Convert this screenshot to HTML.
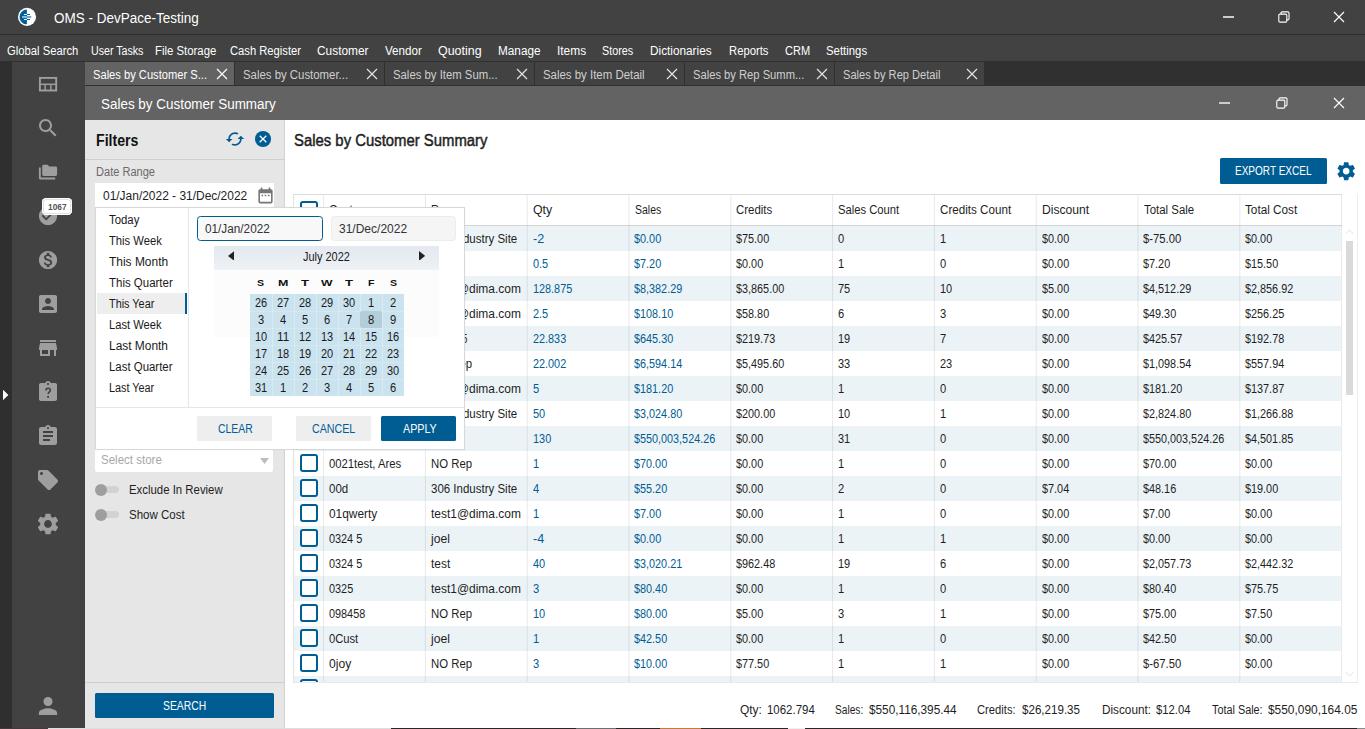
<!DOCTYPE html>
<html>
<head>
<meta charset="utf-8">
<title>OMS - DevPace-Testing</title>
<style>
*{box-sizing:border-box;margin:0;padding:0}
html,body{width:1365px;height:729px;overflow:hidden;background:#2f2f2f;font-family:"Liberation Sans",sans-serif;}
body{position:relative;}
.a{position:absolute;display:block;}
.t{position:absolute;display:block;white-space:nowrap;line-height:20px;transform-origin:0 0;}
</style>
</head>
<body>
<div class="a" style="left:0px;top:0px;width:1365px;height:34px;background:#424242;"></div>
<div class="a" style="left:0px;top:34px;width:1365px;height:1px;background:#2e2e2e;"></div>
<div class="a" style="left:0px;top:35px;width:1365px;height:26px;background:#424242;"></div>
<div class="a" style="left:0px;top:61px;width:1365px;height:25px;background:#303030;"></div>
<div class="a" style="left:0px;top:61px;width:12px;height:668px;background:#2f2f2f;"></div>
<div class="a" style="left:12px;top:62px;width:73px;height:667px;background:#424242;"></div>
<div class="a" style="left:85px;top:86px;width:1280px;height:34px;background:#636363;"></div>
<div class="a" style="left:85px;top:120px;width:199px;height:608px;background:#e6e6e6;"></div>
<div class="a" style="left:284px;top:120px;width:1px;height:608px;background:#d2d2d2;"></div>
<div class="a" style="left:285px;top:120px;width:1080px;height:608px;background:#ffffff;"></div>
<svg class="a" style="left:17px;top:7px;" width="20" height="20" viewBox="0 0 20 20"><circle cx="10" cy="9.9" r="9.05" fill="#fdfefe"/><path d="M9.9 2.5A7.4 7.4 0 0 0 9.9 17.3Z" fill="#005f98"/><path d="M6.9 7.48H9.9M6.9 12.5H9.9" stroke="#fff" stroke-width="1.05"/><path d="M9.9 7.48H13M9.9 12.5H13" stroke="#005f98" stroke-width="1.05"/><path d="M5.1 10H9.9" stroke="#b4d2e4" stroke-width="1.6"/><path d="M9.9 10H14.2" stroke="#4a8dba" stroke-width="1.6"/></svg>
<span class="t " style="left:54.30px;top:8px;font-size:14px;color:#fff;transform:scaleX(0.9636);">OMS - DevPace-Testing</span>
<div class="a" style="left:1223.1px;top:16.1px;width:11px;height:1.5px;background:#cccccc;"></div>
<svg class="a" style="left:1277.7px;top:11px;" width="12" height="12" viewBox="0 0 12 12"><rect x="3" y="0.9" width="8" height="8" rx="1.2" fill="none" stroke="#fff" stroke-width="1.1"/><rect x="0.8" y="3.1" width="8" height="8" rx="1.2" fill="#424242" stroke="#fff" stroke-width="1.1"/></svg>
<svg class="a" style="left:1332.75px;top:11px;" width="12" height="12" viewBox="0 0 12 12"><path d="M1 1L11 11M11 1L1 11" stroke="#fff" stroke-width="1.15" fill="none"/></svg>
<div class="a" style="left:1219.2px;top:102.1px;width:11px;height:1.5px;background:#cccccc;"></div>
<svg class="a" style="left:1275.7px;top:97px;" width="12" height="12" viewBox="0 0 12 12"><rect x="3" y="0.9" width="8" height="8" rx="1.2" fill="none" stroke="#fff" stroke-width="1.1"/><rect x="0.8" y="3.1" width="8" height="8" rx="1.2" fill="#636363" stroke="#fff" stroke-width="1.1"/></svg>
<svg class="a" style="left:1332.75px;top:97px;" width="12" height="12" viewBox="0 0 12 12"><path d="M1 1L11 11M11 1L1 11" stroke="#fff" stroke-width="1.15" fill="none"/></svg>
<span class="t " style="left:6.50px;top:41px;font-size:12px;color:#fff;transform:scaleX(0.9370);">Global Search</span>
<span class="t " style="left:90.60px;top:41px;font-size:12px;color:#fff;transform:scaleX(0.8863);">User Tasks</span>
<span class="t " style="left:155.20px;top:41px;font-size:12px;color:#fff;transform:scaleX(0.9474);">File Storage</span>
<span class="t " style="left:230.00px;top:41px;font-size:12px;color:#fff;transform:scaleX(0.9338);">Cash Register</span>
<span class="t " style="left:317.20px;top:41px;font-size:12px;color:#fff;transform:scaleX(0.9900);">Customer</span>
<span class="t " style="left:384.90px;top:41px;font-size:12px;color:#fff;transform:scaleX(0.9703);">Vendor</span>
<span class="t " style="left:438.00px;top:41px;font-size:12px;color:#fff;transform:scaleX(1.0375);">Quoting</span>
<span class="t " style="left:498.20px;top:41px;font-size:12px;color:#fff;transform:scaleX(0.9823);">Manage</span>
<span class="t " style="left:556.90px;top:41px;font-size:12px;color:#fff;transform:scaleX(0.9918);">Items</span>
<span class="t " style="left:602.30px;top:41px;font-size:12px;color:#fff;transform:scaleX(0.8968);">Stores</span>
<span class="t " style="left:650.30px;top:41px;font-size:12px;color:#fff;transform:scaleX(0.9826);">Dictionaries</span>
<span class="t " style="left:728.50px;top:41px;font-size:12px;color:#fff;transform:scaleX(0.9378);">Reports</span>
<span class="t " style="left:784.60px;top:41px;font-size:12px;color:#fff;transform:scaleX(0.9186);">CRM</span>
<span class="t " style="left:826.40px;top:41px;font-size:12px;color:#fff;transform:scaleX(0.9480);">Settings</span>
<div class="a" style="left:85px;top:62px;width:149px;height:23px;background:#636363;"></div>
<span class="t " style="left:93.40px;top:65px;font-size:12px;color:#fff;transform:scaleX(0.9290);">Sales by Customer S...</span>
<svg class="a" style="left:216px;top:68px;" width="12" height="12" viewBox="0 0 12 12"><path d="M1 1L11 11M11 1L1 11" stroke="#fff" stroke-width="1.2" fill="none"/></svg>
<div class="a" style="left:235px;top:62px;width:149px;height:23px;background:#424242;"></div>
<span class="t " style="left:243.20px;top:65px;font-size:12px;color:#cfcfcf;transform:scaleX(0.9493);">Sales by Customer...</span>
<svg class="a" style="left:366px;top:68px;" width="12" height="12" viewBox="0 0 12 12"><path d="M1 1L11 11M11 1L1 11" stroke="#e4e4e4" stroke-width="1.2" fill="none"/></svg>
<div class="a" style="left:385px;top:62px;width:149px;height:23px;background:#424242;"></div>
<span class="t " style="left:393.10px;top:65px;font-size:12px;color:#cfcfcf;transform:scaleX(0.9448);">Sales by Item Sum...</span>
<svg class="a" style="left:516px;top:68px;" width="12" height="12" viewBox="0 0 12 12"><path d="M1 1L11 11M11 1L1 11" stroke="#e4e4e4" stroke-width="1.2" fill="none"/></svg>
<div class="a" style="left:535px;top:62px;width:149px;height:23px;background:#424242;"></div>
<span class="t " style="left:543.00px;top:65px;font-size:12px;color:#cfcfcf;transform:scaleX(0.9521);">Sales by Item Detail</span>
<svg class="a" style="left:666px;top:68px;" width="12" height="12" viewBox="0 0 12 12"><path d="M1 1L11 11M11 1L1 11" stroke="#e4e4e4" stroke-width="1.2" fill="none"/></svg>
<div class="a" style="left:685px;top:62px;width:149px;height:23px;background:#424242;"></div>
<span class="t " style="left:693.20px;top:65px;font-size:12px;color:#cfcfcf;transform:scaleX(0.9323);">Sales by Rep Summ...</span>
<svg class="a" style="left:816px;top:68px;" width="12" height="12" viewBox="0 0 12 12"><path d="M1 1L11 11M11 1L1 11" stroke="#e4e4e4" stroke-width="1.2" fill="none"/></svg>
<div class="a" style="left:835px;top:62px;width:149px;height:23px;background:#424242;"></div>
<span class="t " style="left:843.10px;top:65px;font-size:12px;color:#cfcfcf;transform:scaleX(0.9242);">Sales by Rep Detail</span>
<svg class="a" style="left:966px;top:68px;" width="12" height="12" viewBox="0 0 12 12"><path d="M1 1L11 11M11 1L1 11" stroke="#e4e4e4" stroke-width="1.2" fill="none"/></svg>
<div class="a" style="left:85px;top:85px;width:1280px;height:1px;background:#303030;"></div>
<span class="t " style="left:101.30px;top:94px;font-size:14px;color:#fff;transform:scaleX(0.9596);">Sales by Customer Summary</span>
<svg class="a" style="left:36px;top:72px;" width="24" height="24" viewBox="0 0 24 24"><rect x="3.9" y="5.9" width="16.3" height="12.6" fill="none" stroke="#9e9e9e" stroke-width="1.9"/><path d="M3.9 12.3H20.2" stroke="#9e9e9e" stroke-width="1.5"/><path d="M9.1 12.3V18.5M14.9 12.3V18.5" stroke="#9e9e9e" stroke-width="1.5"/></svg>
<svg class="a" style="left:36px;top:116px;" width="24" height="24" viewBox="0 0 24 24"><path fill="#9e9e9e" d="M15.5 14h-.79l-.28-.27C15.41 12.59 16 11.11 16 9.5 16 5.91 13.09 3 9.5 3S3 5.91 3 9.5 5.91 16 9.5 16c1.61 0 3.09-.59 4.23-1.57l.27.28v.79l5 4.99L20.49 19l-4.99-5zm-6 0C7.01 14 5 11.99 5 9.5S7.01 5 9.5 5 14 7.01 14 9.5 11.99 14 9.5 14z"/></svg>
<svg class="a" style="left:36px;top:160px;" width="24" height="24" viewBox="0 0 24 24"><path fill="#9e9e9e" d="M2.9 7.4H4.8V17.5H19.2V19.4H4.3C3.5 19.4 2.9 18.8 2.9 18Z"/><path fill="#9e9e9e" d="M7.6 4.8H11.6L13.3 6.5H19.7C20.5 6.5 21.1 7.1 21.1 7.9V14.6C21.1 15.4 20.5 16 19.7 16H7.6C6.8 16 6.2 15.4 6.2 14.6V6.2C6.2 5.4 6.8 4.8 7.6 4.8Z"/></svg>
<svg class="a" style="left:36px;top:204px;" width="24" height="24" viewBox="0 0 24 24"><g transform="translate(12 12) scale(0.91) translate(-12 -12)"><path fill="#9e9e9e" d="M12 2C6.48 2 2 6.48 2 12s4.48 10 10 10 10-4.48 10-10S17.52 2 12 2zm-2 15l-5-5 1.41-1.41L10 14.17l7.59-7.59L19 8l-9 9z"/></g></svg>
<svg class="a" style="left:36px;top:248px;" width="24" height="24" viewBox="0 0 24 24"><g transform="translate(12 12) scale(0.91) translate(-12 -12)"><path fill="#9e9e9e" d="M12 2C6.48 2 2 6.48 2 12s4.48 10 10 10 10-4.48 10-10S17.52 2 12 2zm1.41 16.09V20h-2.67v-1.93c-1.71-.36-3.16-1.46-3.27-3.4h1.96c.1 1.05.82 1.87 2.65 1.87 1.96 0 2.4-.98 2.4-1.59 0-.83-.44-1.61-2.67-2.14-2.48-.6-4.18-1.62-4.18-3.67 0-1.72 1.39-2.84 3.11-3.21V4h2.67v1.95c1.86.45 2.79 1.86 2.85 3.39H14.3c-.05-1.11-.64-1.87-2.22-1.87-1.5 0-2.4.68-2.4 1.64 0 .84.65 1.39 2.67 1.91s4.18 1.39 4.18 3.91c-.01 1.83-1.38 2.83-3.12 3.16z"/></g></svg>
<svg class="a" style="left:36px;top:292px;" width="24" height="24" viewBox="0 0 24 24"><path fill="#9e9e9e" d="M3 5v14c0 1.1.89 2 2 2h14c1.1 0 2-.9 2-2V5c0-1.1-.9-2-2-2H5c-1.11 0-2 .9-2 2zm12 4c0 1.66-1.34 3-3 3s-3-1.34-3-3 1.34-3 3-3 3 1.34 3 3zm-9 8c0-2 4-3.1 6-3.1s6 1.1 6 3.1v1H6v-1z"/></svg>
<svg class="a" style="left:36px;top:336px;" width="24" height="24" viewBox="0 0 24 24"><path fill="#9e9e9e" d="M20 4H4v2h16V4zm1 10v-2l-1-5H4l-1 5v2h1v6h10v-6h4v6h2v-6h1zm-9 4H6v-4h6v4z"/></svg>
<svg class="a" style="left:36px;top:380px;" width="24" height="24" viewBox="0 0 24 24"><path fill="#9e9e9e" d="M19 3h-4.18C14.4 1.84 13.3 1 12 1c-1.3 0-2.4.84-2.82 2H5c-1.1 0-2 .9-2 2v14c0 1.1.9 2 2 2h14c1.1 0 2-.9 2-2V5c0-1.1-.9-2-2-2zm-7 0c.55 0 1 .45 1 1s-.45 1-1 1-1-.45-1-1 .45-1 1-1z"/><path d="M9.9 10.6c0-1.4 1-2.3 2.2-2.3s2.2.8 2.2 2c0 1.7-2.2 1.9-2.2 3.8" fill="none" stroke="#424242" stroke-width="1.6"/><circle cx="12.1" cy="16.9" r="1.05" fill="#424242"/></svg>
<svg class="a" style="left:36px;top:424px;" width="24" height="24" viewBox="0 0 24 24"><path fill="#9e9e9e" d="M19 3h-4.18C14.4 1.84 13.3 1 12 1c-1.3 0-2.4.84-2.82 2H5c-1.1 0-2 .9-2 2v14c0 1.1.9 2 2 2h14c1.1 0 2-.9 2-2V5c0-1.1-.9-2-2-2zm-7 0c.55 0 1 .45 1 1s-.45 1-1 1-1-.45-1-1 .45-1 1-1zm2 14H7v-2h7v2zm3-4H7v-2h10v2zm0-4H7V7h10v2z"/></svg>
<svg class="a" style="left:36px;top:468px;" width="24" height="24" viewBox="0 0 24 24"><path fill="#9e9e9e" d="M21.41 11.58l-9-9C12.05 2.22 11.55 2 11 2H4c-1.1 0-2 .9-2 2v7c0 .55.22 1.05.59 1.42l9 9c.36.36.86.58 1.41.58.55 0 1.05-.22 1.41-.59l7-7c.37-.36.59-.86.59-1.41 0-.55-.23-1.06-.59-1.42zM5.5 7C4.67 7 4 6.33 4 5.5S4.67 4 5.5 4 7 4.67 7 5.5 6.33 7 5.5 7z"/></svg>
<svg class="a" style="left:36px;top:512px;overflow:visible;" width="24" height="24" viewBox="0 0 24 24"><g transform="translate(12 12) scale(1.08) translate(-12 -12)"><path fill="#9e9e9e" d="M19.14 12.94c.04-.3.06-.61.06-.94 0-.32-.02-.64-.07-.94l2.03-1.58c.18-.14.23-.41.12-.61l-1.92-3.32c-.12-.22-.37-.29-.59-.22l-2.39.96c-.5-.38-1.03-.7-1.62-.94l-.36-2.54c-.04-.24-.24-.41-.48-.41h-3.84c-.24 0-.43.17-.47.41l-.36 2.54c-.59.24-1.13.57-1.62.94l-2.39-.96c-.22-.08-.47 0-.59.22L2.74 8.87c-.12.21-.08.47.12.61l2.03 1.58c-.05.3-.09.63-.09.94s.02.64.07.94l-2.03 1.58c-.18.14-.23.41-.12.61l1.92 3.32c.12.22.37.29.59.22l2.39-.96c.5.38 1.03.7 1.62.94l.36 2.54c.05.24.24.41.48.41h3.84c.24 0 .44-.17.47-.41l.36-2.54c.59-.24 1.13-.56 1.62-.94l2.39.96c.22.08.47 0 .59-.22l1.92-3.32c.12-.22.07-.47-.12-.61l-2.01-1.58zM12 15.6c-1.98 0-3.6-1.62-3.6-3.6s1.62-3.6 3.6-3.6 3.6 1.62 3.6 3.6-1.62 3.6-3.6 3.6z"/></g></svg>
<svg class="a" style="left:36px;top:694px;" width="24" height="24" viewBox="0 0 24 24"><g transform="translate(12 12) scale(1.14) translate(-12 -12)"><path fill="#9e9e9e" d="M12 12c2.21 0 4-1.79 4-4s-1.79-4-4-4-4 1.79-4 4 1.79 4 4 4zm0 2c-2.67 0-8 1.34-8 4v2h16v-2c0-2.66-5.33-4-8-4z"/></g></svg>
<svg class="a" style="left:2px;top:389px;" width="8" height="12" viewBox="0 0 8 12"><path d="M1 0.8L6.4 6L1 11.2Z" fill="#fff"/></svg>
<div class="a" style="left:42px;top:198px;width:30px;height:17px;background:#fff;border-radius:4.5px;box-shadow:inset 0 0 0 1px #fff, inset 0 0 0 2px #e2e2e2;"></div>
<span class="t " style="left:47.80px;top:197px;font-size:10px;color:#555;transform:scale(0.8360,0.88);transform-origin:0 13px;font-weight:700;">1067</span>
<span class="t " style="left:95.60px;top:131px;font-size:16px;color:#111;transform:scaleX(0.8830);font-weight:700;">Filters</span>
<svg class="a" style="left:224.8px;top:128.95px;" width="20" height="20" viewBox="0 0 24 24"><path fill="#005d94" d="M19 8l-4 4h3c0 3.31-2.69 6-6 6-1.01 0-1.97-.25-2.8-.7l-1.46 1.46C8.97 19.54 10.43 20 12 20c4.42 0 8-3.58 8-8h3l-4-4zM6 12c0-3.31 2.69-6 6-6 1.01 0 1.97.25 2.8.7l1.46-1.46C15.03 4.46 13.57 4 12 4c-4.42 0-8 3.58-8 8H1l4 4 4-4H6z"/></svg>
<svg class="a" style="left:254.05px;top:129.95px;" width="18" height="18" viewBox="0 0 18 18"><circle cx="9" cy="9" r="8.05" fill="#005d94"/><path d="M5.7 5.7L12.3 12.3M12.3 5.7L5.7 12.3" stroke="#fff" stroke-width="1.3"/></svg>
<div class="a" style="left:85px;top:159px;width:199px;height:1px;background:#cfcfcf;"></div>
<span class="t " style="left:95.60px;top:162px;font-size:12px;color:#6a6a6a;transform:scaleX(0.9212);">Date Range</span>
<div class="a" style="left:95px;top:183px;width:179px;height:25px;background:#fff;"></div>
<span class="t " style="left:103.20px;top:186px;font-size:12px;color:#1e1e1e;transform:scaleX(0.9960);">01/Jan/2022 - 31/Dec/2022</span>
<svg class="a" style="left:255.8px;top:186.0px;" width="19" height="19" viewBox="0 0 24 24"><path fill="#757575" d="M9 11H7v2h2v-2zm4 0h-2v2h2v-2zm4 0h-2v2h2v-2zm2-7h-1V2h-2v2H8V2H6v2H5c-1.11 0-1.99.9-1.99 2L3 20c0 1.1.89 2 2 2h14c1.1 0 2-.9 2-2V6c0-1.1-.9-2-2-2zm0 16H5V9h14v11z"/></svg>
<div class="a" style="left:95px;top:450px;width:178px;height:22px;background:#fff;border-radius:0 0 2px 2px;"></div>
<span class="t " style="left:101.30px;top:450px;font-size:12px;color:#a8a8a8;transform:scaleX(0.9596);">Select store</span>
<svg class="a" style="left:260px;top:458px;" width="9" height="6" viewBox="0 0 9 6"><path d="M0 0H9L4.5 6Z" fill="#bdbdbd"/></svg>
<div class="a" style="left:103px;top:485.8px;width:16px;height:7.6px;border-radius:4px;background:#d2d2d2;"></div>
<div class="a" style="left:95px;top:483.6px;width:12px;height:12px;border-radius:6px;background:#9e9e9e;"></div>
<span class="t " style="left:129.40px;top:480px;font-size:12px;color:#1e1e1e;transform:scaleX(0.9489);">Exclude In Review</span>
<div class="a" style="left:103px;top:510.8px;width:16px;height:7.6px;border-radius:4px;background:#d2d2d2;"></div>
<div class="a" style="left:95px;top:508.6px;width:12px;height:12px;border-radius:6px;background:#9e9e9e;"></div>
<span class="t " style="left:129.40px;top:505px;font-size:12px;color:#1e1e1e;transform:scaleX(0.9583);">Show Cost</span>
<div class="a" style="left:85px;top:682px;width:199px;height:1px;background:#cfcfcf;"></div>
<div class="a" style="left:95px;top:693px;width:179px;height:25px;background:#005d94;border-radius:1.5px;"></div>
<span class="t " style="left:162.90px;top:696px;font-size:12px;color:#fff;transform:scaleX(0.8637);">SEARCH</span>
<span class="t " style="left:293.50px;top:131px;font-size:16px;color:#1e1e1e;transform:scaleX(0.9300);-webkit-text-stroke:0.45px #1e1e1e;">Sales by Customer Summary</span>
<div class="a" style="left:1220px;top:158px;width:107px;height:25.5px;background:#005d94;border-radius:1.5px;"></div>
<span class="t " style="left:1235.40px;top:161px;font-size:12px;color:#fff;transform:scaleX(0.8352);">EXPORT EXCEL</span>
<svg class="a" style="left:1335.05px;top:159.75px;" width="22.4" height="22.4" viewBox="0 0 24 24"><path fill="#005d94" d="M19.14 12.94c.04-.3.06-.61.06-.94 0-.32-.02-.64-.07-.94l2.03-1.58c.18-.14.23-.41.12-.61l-1.92-3.32c-.12-.22-.37-.29-.59-.22l-2.39.96c-.5-.38-1.03-.7-1.62-.94l-.36-2.54c-.04-.24-.24-.41-.48-.41h-3.84c-.24 0-.43.17-.47.41l-.36 2.54c-.59.24-1.13.57-1.62.94l-2.39-.96c-.22-.08-.47 0-.59.22L2.74 8.87c-.12.21-.08.47.12.61l2.03 1.58c-.05.3-.09.63-.09.94s.02.64.07.94l-2.03 1.58c-.18.14-.23.41-.12.61l1.92 3.32c.12.22.37.29.59.22l2.39-.96c.5.38 1.03.7 1.62.94l.36 2.54c.05.24.24.41.48.41h3.84c.24 0 .44-.17.47-.41l.36-2.54c.59-.24 1.13-.56 1.62-.94l2.39.96c.22.08.47 0 .59-.22l1.92-3.32c.12-.22.07-.47-.12-.61l-2.01-1.58zM12 15.6c-1.98 0-3.6-1.62-3.6-3.6s1.62-3.6 3.6-3.6 3.6 1.62 3.6 3.6-1.62 3.6-3.6 3.6z"/></svg>
<div class="a" style="left:294px;top:226px;width:1047px;height:25px;background:#ecf3f7;"></div>
<div class="a" style="left:294px;top:276px;width:1047px;height:25px;background:#ecf3f7;"></div>
<div class="a" style="left:294px;top:326px;width:1047px;height:25px;background:#ecf3f7;"></div>
<div class="a" style="left:294px;top:376px;width:1047px;height:25px;background:#ecf3f7;"></div>
<div class="a" style="left:294px;top:426px;width:1047px;height:25px;background:#ecf3f7;"></div>
<div class="a" style="left:294px;top:476px;width:1047px;height:25px;background:#ecf3f7;"></div>
<div class="a" style="left:294px;top:526px;width:1047px;height:25px;background:#ecf3f7;"></div>
<div class="a" style="left:294px;top:576px;width:1047px;height:25px;background:#ecf3f7;"></div>
<div class="a" style="left:294px;top:626px;width:1047px;height:25px;background:#ecf3f7;"></div>
<div class="a" style="left:294px;top:676px;width:1047px;height:6px;background:#ecf3f7;"></div>
<span class="t " style="left:329.10px;top:200px;font-size:12px;color:#1e1e1e;transform:scaleX(0.9650);">Customer</span>
<span class="t " style="left:430.90px;top:200px;font-size:12px;color:#1e1e1e;transform:scaleX(0.9178);">Rep</span>
<span class="t " style="left:532.70px;top:200px;font-size:12px;color:#1e1e1e;transform:scaleX(1.0283);">Qty</span>
<span class="t " style="left:634.50px;top:200px;font-size:12px;color:#1e1e1e;transform:scaleX(0.8730);">Sales</span>
<span class="t " style="left:736.30px;top:200px;font-size:12px;color:#1e1e1e;transform:scaleX(0.9522);">Credits</span>
<span class="t " style="left:838.10px;top:200px;font-size:12px;color:#1e1e1e;transform:scaleX(0.9361);">Sales Count</span>
<span class="t " style="left:939.90px;top:200px;font-size:12px;color:#1e1e1e;transform:scaleX(0.9705);">Credits Count</span>
<span class="t " style="left:1041.70px;top:200px;font-size:12px;color:#1e1e1e;transform:scaleX(1.0109);">Discount</span>
<span class="t " style="left:1143.50px;top:200px;font-size:12px;color:#1e1e1e;transform:scaleX(0.9525);">Total Sale</span>
<span class="t " style="left:1245.30px;top:200px;font-size:12px;color:#1e1e1e;transform:scaleX(0.9784);">Total Cost</span>
<span class="t " style="left:430.60px;top:229px;font-size:12px;color:#1e1e1e;transform:scaleX(0.9573);">306 Industry Site</span>
<span class="t " style="left:532.60px;top:229px;font-size:12px;color:#005d94;transform:scaleX(1.0499);">-2</span>
<span class="t " style="left:634.40px;top:229px;font-size:12px;color:#005d94;transform:scaleX(0.9059);">$0.00</span>
<span class="t " style="left:736.20px;top:229px;font-size:12px;color:#1e1e1e;transform:scaleX(0.9044);">$75.00</span>
<span class="t " style="left:838.00px;top:229px;font-size:12px;color:#1e1e1e;transform:scaleX(0.9293);">0</span>
<span class="t " style="left:939.80px;top:229px;font-size:12px;color:#1e1e1e;transform:scaleX(0.9293);">1</span>
<span class="t " style="left:1041.60px;top:229px;font-size:12px;color:#1e1e1e;transform:scaleX(0.9059);">$0.00</span>
<span class="t " style="left:1143.40px;top:229px;font-size:12px;color:#1e1e1e;transform:scaleX(0.9385);">$-75.00</span>
<span class="t " style="left:1245.20px;top:229px;font-size:12px;color:#1e1e1e;transform:scaleX(0.9059);">$0.00</span>
<span class="t " style="left:532.60px;top:254px;font-size:12px;color:#005d94;transform:scaleX(0.9113);">0.5</span>
<span class="t " style="left:634.40px;top:254px;font-size:12px;color:#005d94;transform:scaleX(0.9059);">$7.20</span>
<span class="t " style="left:736.20px;top:254px;font-size:12px;color:#1e1e1e;transform:scaleX(0.9059);">$0.00</span>
<span class="t " style="left:838.00px;top:254px;font-size:12px;color:#1e1e1e;transform:scaleX(0.9293);">1</span>
<span class="t " style="left:939.80px;top:254px;font-size:12px;color:#1e1e1e;transform:scaleX(0.9293);">0</span>
<span class="t " style="left:1041.60px;top:254px;font-size:12px;color:#1e1e1e;transform:scaleX(0.9059);">$0.00</span>
<span class="t " style="left:1143.40px;top:254px;font-size:12px;color:#1e1e1e;transform:scaleX(0.9059);">$7.20</span>
<span class="t " style="left:1245.20px;top:254px;font-size:12px;color:#1e1e1e;transform:scaleX(0.9044);">$15.50</span>
<span class="t " style="left:430.60px;top:279px;font-size:12px;color:#1e1e1e;transform:scaleX(0.9965);">test1@dima.com</span>
<span class="t " style="left:532.60px;top:279px;font-size:12px;color:#005d94;transform:scaleX(0.9036);">128.875</span>
<span class="t " style="left:634.40px;top:279px;font-size:12px;color:#005d94;transform:scaleX(0.9028);">$8,382.29</span>
<span class="t " style="left:736.20px;top:279px;font-size:12px;color:#1e1e1e;transform:scaleX(0.9028);">$3,865.00</span>
<span class="t " style="left:838.00px;top:279px;font-size:12px;color:#1e1e1e;transform:scaleX(0.9143);">75</span>
<span class="t " style="left:939.80px;top:279px;font-size:12px;color:#1e1e1e;transform:scaleX(0.9143);">10</span>
<span class="t " style="left:1041.60px;top:279px;font-size:12px;color:#1e1e1e;transform:scaleX(0.9059);">$5.00</span>
<span class="t " style="left:1143.40px;top:279px;font-size:12px;color:#1e1e1e;transform:scaleX(0.9028);">$4,512.29</span>
<span class="t " style="left:1245.20px;top:279px;font-size:12px;color:#1e1e1e;transform:scaleX(0.9028);">$2,856.92</span>
<span class="t " style="left:430.60px;top:304px;font-size:12px;color:#1e1e1e;transform:scaleX(0.9965);">test1@dima.com</span>
<span class="t " style="left:532.60px;top:304px;font-size:12px;color:#005d94;transform:scaleX(0.9113);">2.5</span>
<span class="t " style="left:634.40px;top:304px;font-size:12px;color:#005d94;transform:scaleX(0.9036);">$108.10</span>
<span class="t " style="left:736.20px;top:304px;font-size:12px;color:#1e1e1e;transform:scaleX(0.9044);">$58.80</span>
<span class="t " style="left:838.00px;top:304px;font-size:12px;color:#1e1e1e;transform:scaleX(0.9293);">6</span>
<span class="t " style="left:939.80px;top:304px;font-size:12px;color:#1e1e1e;transform:scaleX(0.9293);">3</span>
<span class="t " style="left:1041.60px;top:304px;font-size:12px;color:#1e1e1e;transform:scaleX(0.9059);">$0.00</span>
<span class="t " style="left:1143.40px;top:304px;font-size:12px;color:#1e1e1e;transform:scaleX(0.9044);">$49.30</span>
<span class="t " style="left:1245.20px;top:304px;font-size:12px;color:#1e1e1e;transform:scaleX(0.9036);">$256.25</span>
<span class="t " style="left:532.60px;top:329px;font-size:12px;color:#005d94;transform:scaleX(0.9044);">22.833</span>
<span class="t " style="left:634.40px;top:329px;font-size:12px;color:#005d94;transform:scaleX(0.9036);">$645.30</span>
<span class="t " style="left:736.20px;top:329px;font-size:12px;color:#1e1e1e;transform:scaleX(0.9036);">$219.73</span>
<span class="t " style="left:838.00px;top:329px;font-size:12px;color:#1e1e1e;transform:scaleX(0.9143);">19</span>
<span class="t " style="left:939.80px;top:329px;font-size:12px;color:#1e1e1e;transform:scaleX(0.9293);">7</span>
<span class="t " style="left:1041.60px;top:329px;font-size:12px;color:#1e1e1e;transform:scaleX(0.9059);">$0.00</span>
<span class="t " style="left:1143.40px;top:329px;font-size:12px;color:#1e1e1e;transform:scaleX(0.9036);">$425.57</span>
<span class="t " style="left:1245.20px;top:329px;font-size:12px;color:#1e1e1e;transform:scaleX(0.9036);">$192.78</span>
<span class="t " style="left:430.60px;top:354px;font-size:12px;color:#1e1e1e;transform:scaleX(0.9505);">NO Rep</span>
<span class="t " style="left:532.60px;top:354px;font-size:12px;color:#005d94;transform:scaleX(0.9044);">22.002</span>
<span class="t " style="left:634.40px;top:354px;font-size:12px;color:#005d94;transform:scaleX(0.9028);">$6,594.14</span>
<span class="t " style="left:736.20px;top:354px;font-size:12px;color:#1e1e1e;transform:scaleX(0.9028);">$5,495.60</span>
<span class="t " style="left:838.00px;top:354px;font-size:12px;color:#1e1e1e;transform:scaleX(0.9143);">33</span>
<span class="t " style="left:939.80px;top:354px;font-size:12px;color:#1e1e1e;transform:scaleX(0.9143);">23</span>
<span class="t " style="left:1041.60px;top:354px;font-size:12px;color:#1e1e1e;transform:scaleX(0.9059);">$0.00</span>
<span class="t " style="left:1143.40px;top:354px;font-size:12px;color:#1e1e1e;transform:scaleX(0.9028);">$1,098.54</span>
<span class="t " style="left:1245.20px;top:354px;font-size:12px;color:#1e1e1e;transform:scaleX(0.9036);">$557.94</span>
<span class="t " style="left:430.60px;top:379px;font-size:12px;color:#1e1e1e;transform:scaleX(0.9965);">test1@dima.com</span>
<span class="t " style="left:532.60px;top:379px;font-size:12px;color:#005d94;transform:scaleX(0.9293);">5</span>
<span class="t " style="left:634.40px;top:379px;font-size:12px;color:#005d94;transform:scaleX(0.9036);">$181.20</span>
<span class="t " style="left:736.20px;top:379px;font-size:12px;color:#1e1e1e;transform:scaleX(0.9059);">$0.00</span>
<span class="t " style="left:838.00px;top:379px;font-size:12px;color:#1e1e1e;transform:scaleX(0.9293);">1</span>
<span class="t " style="left:939.80px;top:379px;font-size:12px;color:#1e1e1e;transform:scaleX(0.9293);">0</span>
<span class="t " style="left:1041.60px;top:379px;font-size:12px;color:#1e1e1e;transform:scaleX(0.9059);">$0.00</span>
<span class="t " style="left:1143.40px;top:379px;font-size:12px;color:#1e1e1e;transform:scaleX(0.9036);">$181.20</span>
<span class="t " style="left:1245.20px;top:379px;font-size:12px;color:#1e1e1e;transform:scaleX(0.9036);">$137.87</span>
<span class="t " style="left:430.60px;top:404px;font-size:12px;color:#1e1e1e;transform:scaleX(0.9573);">306 Industry Site</span>
<span class="t " style="left:532.60px;top:404px;font-size:12px;color:#005d94;transform:scaleX(0.9143);">50</span>
<span class="t " style="left:634.40px;top:404px;font-size:12px;color:#005d94;transform:scaleX(0.9028);">$3,024.80</span>
<span class="t " style="left:736.20px;top:404px;font-size:12px;color:#1e1e1e;transform:scaleX(0.9036);">$200.00</span>
<span class="t " style="left:838.00px;top:404px;font-size:12px;color:#1e1e1e;transform:scaleX(0.9143);">10</span>
<span class="t " style="left:939.80px;top:404px;font-size:12px;color:#1e1e1e;transform:scaleX(0.9293);">1</span>
<span class="t " style="left:1041.60px;top:404px;font-size:12px;color:#1e1e1e;transform:scaleX(0.9059);">$0.00</span>
<span class="t " style="left:1143.40px;top:404px;font-size:12px;color:#1e1e1e;transform:scaleX(0.9028);">$2,824.80</span>
<span class="t " style="left:1245.20px;top:404px;font-size:12px;color:#1e1e1e;transform:scaleX(0.9028);">$1,266.88</span>
<span class="t " style="left:532.60px;top:429px;font-size:12px;color:#005d94;transform:scaleX(0.9093);">130</span>
<span class="t " style="left:634.40px;top:429px;font-size:12px;color:#005d94;transform:scaleX(0.9014);">$550,003,524.26</span>
<span class="t " style="left:736.20px;top:429px;font-size:12px;color:#1e1e1e;transform:scaleX(0.9059);">$0.00</span>
<span class="t " style="left:838.00px;top:429px;font-size:12px;color:#1e1e1e;transform:scaleX(0.9143);">31</span>
<span class="t " style="left:939.80px;top:429px;font-size:12px;color:#1e1e1e;transform:scaleX(0.9293);">0</span>
<span class="t " style="left:1041.60px;top:429px;font-size:12px;color:#1e1e1e;transform:scaleX(0.9059);">$0.00</span>
<span class="t " style="left:1143.40px;top:429px;font-size:12px;color:#1e1e1e;transform:scaleX(0.9014);">$550,003,524.26</span>
<span class="t " style="left:1245.20px;top:429px;font-size:12px;color:#1e1e1e;transform:scaleX(0.9028);">$4,501.85</span>
<span class="t " style="left:328.80px;top:454px;font-size:12px;color:#1e1e1e;transform:scaleX(0.9411);">0021test, Ares</span>
<span class="t " style="left:430.60px;top:454px;font-size:12px;color:#1e1e1e;transform:scaleX(0.9505);">NO Rep</span>
<span class="t " style="left:532.60px;top:454px;font-size:12px;color:#005d94;transform:scaleX(0.9293);">1</span>
<span class="t " style="left:634.40px;top:454px;font-size:12px;color:#005d94;transform:scaleX(0.9044);">$70.00</span>
<span class="t " style="left:736.20px;top:454px;font-size:12px;color:#1e1e1e;transform:scaleX(0.9059);">$0.00</span>
<span class="t " style="left:838.00px;top:454px;font-size:12px;color:#1e1e1e;transform:scaleX(0.9293);">1</span>
<span class="t " style="left:939.80px;top:454px;font-size:12px;color:#1e1e1e;transform:scaleX(0.9293);">0</span>
<span class="t " style="left:1041.60px;top:454px;font-size:12px;color:#1e1e1e;transform:scaleX(0.9059);">$0.00</span>
<span class="t " style="left:1143.40px;top:454px;font-size:12px;color:#1e1e1e;transform:scaleX(0.9044);">$70.00</span>
<span class="t " style="left:1245.20px;top:454px;font-size:12px;color:#1e1e1e;transform:scaleX(0.9059);">$0.00</span>
<span class="t " style="left:328.80px;top:479px;font-size:12px;color:#1e1e1e;transform:scaleX(0.9592);">00d</span>
<span class="t " style="left:430.60px;top:479px;font-size:12px;color:#1e1e1e;transform:scaleX(0.9573);">306 Industry Site</span>
<span class="t " style="left:532.60px;top:479px;font-size:12px;color:#005d94;transform:scaleX(0.9293);">4</span>
<span class="t " style="left:634.40px;top:479px;font-size:12px;color:#005d94;transform:scaleX(0.9044);">$55.20</span>
<span class="t " style="left:736.20px;top:479px;font-size:12px;color:#1e1e1e;transform:scaleX(0.9059);">$0.00</span>
<span class="t " style="left:838.00px;top:479px;font-size:12px;color:#1e1e1e;transform:scaleX(0.9293);">2</span>
<span class="t " style="left:939.80px;top:479px;font-size:12px;color:#1e1e1e;transform:scaleX(0.9293);">0</span>
<span class="t " style="left:1041.60px;top:479px;font-size:12px;color:#1e1e1e;transform:scaleX(0.9059);">$7.04</span>
<span class="t " style="left:1143.40px;top:479px;font-size:12px;color:#1e1e1e;transform:scaleX(0.9044);">$48.16</span>
<span class="t " style="left:1245.20px;top:479px;font-size:12px;color:#1e1e1e;transform:scaleX(0.9044);">$19.00</span>
<span class="t " style="left:328.80px;top:504px;font-size:12px;color:#1e1e1e;transform:scaleX(0.9898);">01qwerty</span>
<span class="t " style="left:430.60px;top:504px;font-size:12px;color:#1e1e1e;transform:scaleX(0.9965);">test1@dima.com</span>
<span class="t " style="left:532.60px;top:504px;font-size:12px;color:#005d94;transform:scaleX(0.9293);">1</span>
<span class="t " style="left:634.40px;top:504px;font-size:12px;color:#005d94;transform:scaleX(0.9059);">$7.00</span>
<span class="t " style="left:736.20px;top:504px;font-size:12px;color:#1e1e1e;transform:scaleX(0.9059);">$0.00</span>
<span class="t " style="left:838.00px;top:504px;font-size:12px;color:#1e1e1e;transform:scaleX(0.9293);">1</span>
<span class="t " style="left:939.80px;top:504px;font-size:12px;color:#1e1e1e;transform:scaleX(0.9293);">0</span>
<span class="t " style="left:1041.60px;top:504px;font-size:12px;color:#1e1e1e;transform:scaleX(0.9059);">$0.00</span>
<span class="t " style="left:1143.40px;top:504px;font-size:12px;color:#1e1e1e;transform:scaleX(0.9059);">$7.00</span>
<span class="t " style="left:1245.20px;top:504px;font-size:12px;color:#1e1e1e;transform:scaleX(0.9059);">$0.00</span>
<span class="t " style="left:328.80px;top:529px;font-size:12px;color:#1e1e1e;transform:scaleX(0.9044);">0324 5</span>
<span class="t " style="left:430.90px;top:529px;font-size:12px;color:#1e1e1e;transform:scaleX(1.0114);">joel</span>
<span class="t " style="left:532.60px;top:529px;font-size:12px;color:#005d94;transform:scaleX(1.0499);">-4</span>
<span class="t " style="left:634.40px;top:529px;font-size:12px;color:#005d94;transform:scaleX(0.9059);">$0.00</span>
<span class="t " style="left:736.20px;top:529px;font-size:12px;color:#1e1e1e;transform:scaleX(0.9059);">$0.00</span>
<span class="t " style="left:838.00px;top:529px;font-size:12px;color:#1e1e1e;transform:scaleX(0.9293);">1</span>
<span class="t " style="left:939.80px;top:529px;font-size:12px;color:#1e1e1e;transform:scaleX(0.9293);">1</span>
<span class="t " style="left:1041.60px;top:529px;font-size:12px;color:#1e1e1e;transform:scaleX(0.9059);">$0.00</span>
<span class="t " style="left:1143.40px;top:529px;font-size:12px;color:#1e1e1e;transform:scaleX(0.9059);">$0.00</span>
<span class="t " style="left:1245.20px;top:529px;font-size:12px;color:#1e1e1e;transform:scaleX(0.9059);">$0.00</span>
<span class="t " style="left:328.80px;top:554px;font-size:12px;color:#1e1e1e;transform:scaleX(0.9044);">0324 5</span>
<span class="t " style="left:430.60px;top:554px;font-size:12px;color:#1e1e1e;transform:scaleX(0.9926);">test</span>
<span class="t " style="left:532.60px;top:554px;font-size:12px;color:#005d94;transform:scaleX(0.9143);">40</span>
<span class="t " style="left:634.40px;top:554px;font-size:12px;color:#005d94;transform:scaleX(0.9028);">$3,020.21</span>
<span class="t " style="left:736.20px;top:554px;font-size:12px;color:#1e1e1e;transform:scaleX(0.9036);">$962.48</span>
<span class="t " style="left:838.00px;top:554px;font-size:12px;color:#1e1e1e;transform:scaleX(0.9143);">19</span>
<span class="t " style="left:939.80px;top:554px;font-size:12px;color:#1e1e1e;transform:scaleX(0.9293);">6</span>
<span class="t " style="left:1041.60px;top:554px;font-size:12px;color:#1e1e1e;transform:scaleX(0.9059);">$0.00</span>
<span class="t " style="left:1143.40px;top:554px;font-size:12px;color:#1e1e1e;transform:scaleX(0.9028);">$2,057.73</span>
<span class="t " style="left:1245.20px;top:554px;font-size:12px;color:#1e1e1e;transform:scaleX(0.9028);">$2,442.32</span>
<span class="t " style="left:328.80px;top:579px;font-size:12px;color:#1e1e1e;transform:scaleX(0.9064);">0325</span>
<span class="t " style="left:430.60px;top:579px;font-size:12px;color:#1e1e1e;transform:scaleX(0.9965);">test1@dima.com</span>
<span class="t " style="left:532.60px;top:579px;font-size:12px;color:#005d94;transform:scaleX(0.9293);">3</span>
<span class="t " style="left:634.40px;top:579px;font-size:12px;color:#005d94;transform:scaleX(0.9044);">$80.40</span>
<span class="t " style="left:736.20px;top:579px;font-size:12px;color:#1e1e1e;transform:scaleX(0.9059);">$0.00</span>
<span class="t " style="left:838.00px;top:579px;font-size:12px;color:#1e1e1e;transform:scaleX(0.9293);">1</span>
<span class="t " style="left:939.80px;top:579px;font-size:12px;color:#1e1e1e;transform:scaleX(0.9293);">0</span>
<span class="t " style="left:1041.60px;top:579px;font-size:12px;color:#1e1e1e;transform:scaleX(0.9059);">$0.00</span>
<span class="t " style="left:1143.40px;top:579px;font-size:12px;color:#1e1e1e;transform:scaleX(0.9044);">$80.40</span>
<span class="t " style="left:1245.20px;top:579px;font-size:12px;color:#1e1e1e;transform:scaleX(0.9044);">$75.75</span>
<span class="t " style="left:328.80px;top:604px;font-size:12px;color:#1e1e1e;transform:scaleX(0.9040);">098458</span>
<span class="t " style="left:430.60px;top:604px;font-size:12px;color:#1e1e1e;transform:scaleX(0.9505);">NO Rep</span>
<span class="t " style="left:532.60px;top:604px;font-size:12px;color:#005d94;transform:scaleX(0.9143);">10</span>
<span class="t " style="left:634.40px;top:604px;font-size:12px;color:#005d94;transform:scaleX(0.9044);">$80.00</span>
<span class="t " style="left:736.20px;top:604px;font-size:12px;color:#1e1e1e;transform:scaleX(0.9059);">$5.00</span>
<span class="t " style="left:838.00px;top:604px;font-size:12px;color:#1e1e1e;transform:scaleX(0.9293);">3</span>
<span class="t " style="left:939.80px;top:604px;font-size:12px;color:#1e1e1e;transform:scaleX(0.9293);">1</span>
<span class="t " style="left:1041.60px;top:604px;font-size:12px;color:#1e1e1e;transform:scaleX(0.9059);">$0.00</span>
<span class="t " style="left:1143.40px;top:604px;font-size:12px;color:#1e1e1e;transform:scaleX(0.9044);">$75.00</span>
<span class="t " style="left:1245.20px;top:604px;font-size:12px;color:#1e1e1e;transform:scaleX(0.9059);">$7.50</span>
<span class="t " style="left:328.80px;top:629px;font-size:12px;color:#1e1e1e;transform:scaleX(0.9316);">0Cust</span>
<span class="t " style="left:430.90px;top:629px;font-size:12px;color:#1e1e1e;transform:scaleX(1.0114);">joel</span>
<span class="t " style="left:532.60px;top:629px;font-size:12px;color:#005d94;transform:scaleX(0.9293);">1</span>
<span class="t " style="left:634.40px;top:629px;font-size:12px;color:#005d94;transform:scaleX(0.9044);">$42.50</span>
<span class="t " style="left:736.20px;top:629px;font-size:12px;color:#1e1e1e;transform:scaleX(0.9059);">$0.00</span>
<span class="t " style="left:838.00px;top:629px;font-size:12px;color:#1e1e1e;transform:scaleX(0.9293);">1</span>
<span class="t " style="left:939.80px;top:629px;font-size:12px;color:#1e1e1e;transform:scaleX(0.9293);">0</span>
<span class="t " style="left:1041.60px;top:629px;font-size:12px;color:#1e1e1e;transform:scaleX(0.9059);">$0.00</span>
<span class="t " style="left:1143.40px;top:629px;font-size:12px;color:#1e1e1e;transform:scaleX(0.9044);">$42.50</span>
<span class="t " style="left:1245.20px;top:629px;font-size:12px;color:#1e1e1e;transform:scaleX(0.9059);">$0.00</span>
<span class="t " style="left:328.80px;top:654px;font-size:12px;color:#1e1e1e;transform:scaleX(1.0087);">0joy</span>
<span class="t " style="left:430.60px;top:654px;font-size:12px;color:#1e1e1e;transform:scaleX(0.9505);">NO Rep</span>
<span class="t " style="left:532.60px;top:654px;font-size:12px;color:#005d94;transform:scaleX(0.9293);">3</span>
<span class="t " style="left:634.40px;top:654px;font-size:12px;color:#005d94;transform:scaleX(0.9044);">$10.00</span>
<span class="t " style="left:736.20px;top:654px;font-size:12px;color:#1e1e1e;transform:scaleX(0.9044);">$77.50</span>
<span class="t " style="left:838.00px;top:654px;font-size:12px;color:#1e1e1e;transform:scaleX(0.9293);">1</span>
<span class="t " style="left:939.80px;top:654px;font-size:12px;color:#1e1e1e;transform:scaleX(0.9293);">1</span>
<span class="t " style="left:1041.60px;top:654px;font-size:12px;color:#1e1e1e;transform:scaleX(0.9059);">$0.00</span>
<span class="t " style="left:1143.40px;top:654px;font-size:12px;color:#1e1e1e;transform:scaleX(0.9385);">$-67.50</span>
<span class="t " style="left:1245.20px;top:654px;font-size:12px;color:#1e1e1e;transform:scaleX(0.9059);">$0.00</span>
<span class="t " style="left:462.00px;top:329px;font-size:12px;color:#1e1e1e;transform:scaleX(0.8094);">5</span>
<div class="a" style="left:293px;top:194px;width:1049px;height:1px;background:#dcdcdc;"></div>
<div class="a" style="left:293px;top:225px;width:1049px;height:1px;background:#d4d4d4;"></div>
<div class="a" style="left:293px;top:682px;width:1065px;height:1px;background:#e9e9e9;"></div>
<div class="a" style="left:293px;top:194px;width:1px;height:488px;background:#e2e2e2;"></div>
<div class="a" style="left:323px;top:195px;width:1px;height:487px;background:rgba(0,0,0,0.076);"></div>
<div class="a" style="left:324px;top:195px;width:1px;height:487px;background:rgba(0,0,0,0.009);"></div>
<div class="a" style="left:424px;top:195px;width:1px;height:487px;background:rgba(0,0,0,0.008);"></div>
<div class="a" style="left:425px;top:195px;width:1px;height:487px;background:rgba(0,0,0,0.077);"></div>
<div class="a" style="left:526px;top:195px;width:1px;height:487px;background:rgba(0,0,0,0.025);"></div>
<div class="a" style="left:527px;top:195px;width:1px;height:487px;background:rgba(0,0,0,0.060);"></div>
<div class="a" style="left:628px;top:195px;width:1px;height:487px;background:rgba(0,0,0,0.043);"></div>
<div class="a" style="left:629px;top:195px;width:1px;height:487px;background:rgba(0,0,0,0.043);"></div>
<div class="a" style="left:730px;top:195px;width:1px;height:487px;background:rgba(0,0,0,0.060);"></div>
<div class="a" style="left:731px;top:195px;width:1px;height:487px;background:rgba(0,0,0,0.025);"></div>
<div class="a" style="left:832px;top:195px;width:1px;height:487px;background:rgba(0,0,0,0.076);"></div>
<div class="a" style="left:833px;top:195px;width:1px;height:487px;background:rgba(0,0,0,0.009);"></div>
<div class="a" style="left:933px;top:195px;width:1px;height:487px;background:rgba(0,0,0,0.009);"></div>
<div class="a" style="left:934px;top:195px;width:1px;height:487px;background:rgba(0,0,0,0.076);"></div>
<div class="a" style="left:1035px;top:195px;width:1px;height:487px;background:rgba(0,0,0,0.025);"></div>
<div class="a" style="left:1036px;top:195px;width:1px;height:487px;background:rgba(0,0,0,0.060);"></div>
<div class="a" style="left:1137px;top:195px;width:1px;height:487px;background:rgba(0,0,0,0.043);"></div>
<div class="a" style="left:1138px;top:195px;width:1px;height:487px;background:rgba(0,0,0,0.043);"></div>
<div class="a" style="left:1239px;top:195px;width:1px;height:487px;background:rgba(0,0,0,0.060);"></div>
<div class="a" style="left:1240px;top:195px;width:1px;height:487px;background:rgba(0,0,0,0.025);"></div>
<div class="a" style="left:1341px;top:195px;width:1px;height:487px;background:rgba(0,0,0,0.077);"></div>
<div class="a" style="left:1342px;top:195px;width:1px;height:487px;background:rgba(0,0,0,0.008);"></div>
<div class="a" style="left:1357px;top:194px;width:1px;height:488px;background:#ededed;"></div>
<div class="a" style="left:300px;top:201px;width:18px;height:18px;border:2px solid #005d94;border-radius:3px;background:#fff;"></div>
<div class="a" style="left:300px;top:229px;width:18px;height:18px;border:2px solid #005d94;border-radius:3px;background:#fff;"></div>
<div class="a" style="left:300px;top:254px;width:18px;height:18px;border:2px solid #005d94;border-radius:3px;background:#fff;"></div>
<div class="a" style="left:300px;top:279px;width:18px;height:18px;border:2px solid #005d94;border-radius:3px;background:#fff;"></div>
<div class="a" style="left:300px;top:304px;width:18px;height:18px;border:2px solid #005d94;border-radius:3px;background:#fff;"></div>
<div class="a" style="left:300px;top:329px;width:18px;height:18px;border:2px solid #005d94;border-radius:3px;background:#fff;"></div>
<div class="a" style="left:300px;top:354px;width:18px;height:18px;border:2px solid #005d94;border-radius:3px;background:#fff;"></div>
<div class="a" style="left:300px;top:379px;width:18px;height:18px;border:2px solid #005d94;border-radius:3px;background:#fff;"></div>
<div class="a" style="left:300px;top:404px;width:18px;height:18px;border:2px solid #005d94;border-radius:3px;background:#fff;"></div>
<div class="a" style="left:300px;top:429px;width:18px;height:18px;border:2px solid #005d94;border-radius:3px;background:#fff;"></div>
<div class="a" style="left:300px;top:454px;width:18px;height:18px;border:2px solid #005d94;border-radius:3px;background:#fff;"></div>
<div class="a" style="left:300px;top:479px;width:18px;height:18px;border:2px solid #005d94;border-radius:3px;background:#fff;"></div>
<div class="a" style="left:300px;top:504px;width:18px;height:18px;border:2px solid #005d94;border-radius:3px;background:#fff;"></div>
<div class="a" style="left:300px;top:529px;width:18px;height:18px;border:2px solid #005d94;border-radius:3px;background:#fff;"></div>
<div class="a" style="left:300px;top:554px;width:18px;height:18px;border:2px solid #005d94;border-radius:3px;background:#fff;"></div>
<div class="a" style="left:300px;top:579px;width:18px;height:18px;border:2px solid #005d94;border-radius:3px;background:#fff;"></div>
<div class="a" style="left:300px;top:604px;width:18px;height:18px;border:2px solid #005d94;border-radius:3px;background:#fff;"></div>
<div class="a" style="left:300px;top:629px;width:18px;height:18px;border:2px solid #005d94;border-radius:3px;background:#fff;"></div>
<div class="a" style="left:300px;top:654px;width:18px;height:18px;border:2px solid #005d94;border-radius:3px;background:#fff;"></div>
<div class="a" style="left:300px;top:679px;width:18px;height:3px;overflow:hidden;"><div style="width:18px;height:18px;border:2px solid #005d94;border-radius:3px;background:#fff;"></div></div>
<div class="a" style="left:1346px;top:241px;width:7px;height:153.5px;background:#dadada;"></div>
<svg class="a" style="left:1345px;top:229px;" width="9" height="6" viewBox="0 0 9 6"><path d="M0.5 5.2L4.5 1L8.5 5.2" fill="none" stroke="#e3e3e3" stroke-width="1"/></svg>
<svg class="a" style="left:1345px;top:671px;" width="9" height="6" viewBox="0 0 9 6"><path d="M0.5 0.8L4.5 5L8.5 0.8" fill="none" stroke="#e3e3e3" stroke-width="1"/></svg>
<!--FOOT-->
<span class="t " style="left:740.00px;top:700px;font-size:12px;color:#1e1e1e;transform:scaleX(0.9956);">Qty:</span>
<span class="t " style="left:766.90px;top:700px;font-size:12px;color:#1e1e1e;transform:scaleX(0.9550);">1062.794</span>
<span class="t " style="left:835.10px;top:700px;font-size:12px;color:#1e1e1e;transform:scaleX(0.8456);">Sales:</span>
<span class="t " style="left:869.00px;top:700px;font-size:12px;color:#1e1e1e;transform:scaleX(0.9821);">$550,116,395.44</span>
<span class="t " style="left:977.40px;top:700px;font-size:12px;color:#1e1e1e;transform:scaleX(0.9337);">Credits:</span>
<span class="t " style="left:1022.30px;top:700px;font-size:12px;color:#1e1e1e;transform:scaleX(0.9657);">$26,219.35</span>
<span class="t " style="left:1101.50px;top:700px;font-size:12px;color:#1e1e1e;transform:scaleX(0.9797);">Discount:</span>
<span class="t " style="left:1156.00px;top:700px;font-size:12px;color:#1e1e1e;transform:scaleX(0.9371);">$12.04</span>
<span class="t " style="left:1212.00px;top:700px;font-size:12px;color:#1e1e1e;transform:scaleX(0.9031);">Total Sale:</span>
<span class="t " style="left:1268.10px;top:700px;font-size:12px;color:#1e1e1e;transform:scaleX(0.9924);">$550,090,164.05</span>
<div class="a" style="left:0px;top:728px;width:48px;height:1px;background:#45383a;"></div>
<div class="a" style="left:48px;top:728px;width:343px;height:1px;background:#dedede;"></div>
<div class="a" style="left:391px;top:728px;width:974px;height:1px;background:#2e2425;"></div>
<div class="a" style="left:576px;top:728px;width:40px;height:1px;background:#6e6e72;"></div>
<div class="a" style="left:660px;top:728px;width:40.5px;height:1px;background:#c47a3a;"></div>
<div class="a" style="left:787.5px;top:728px;width:17.5px;height:1px;background:#f0f0f0;"></div>
<div class="a" style="left:1357px;top:728px;width:8px;height:1px;background:#8a8a8a;"></div>
<div class="a" style="left:95px;top:207px;width:370px;height:243px;background:#fff;border:1px solid #d8d8d8;box-shadow:0 0 2px rgba(0,0,0,0.04);"></div>
<div class="a" style="left:97px;top:293px;width:88px;height:21px;background:#eeeeee;"></div>
<div class="a" style="left:185px;top:293px;width:2px;height:21px;background:#005d94;"></div>
<span class="t " style="left:109.40px;top:210px;font-size:12px;color:#1a1a1a;transform:scaleX(0.9464);">Today</span>
<span class="t " style="left:109.40px;top:231px;font-size:12px;color:#1a1a1a;transform:scaleX(0.9365);">This Week</span>
<span class="t " style="left:109.40px;top:252px;font-size:12px;color:#1a1a1a;transform:scaleX(0.9958);">This Month</span>
<span class="t " style="left:109.40px;top:273px;font-size:12px;color:#1a1a1a;transform:scaleX(0.9553);">This Quarter</span>
<span class="t " style="left:109.40px;top:294px;font-size:12px;color:#1a1a1a;transform:scaleX(0.9055);">This Year</span>
<span class="t " style="left:109.40px;top:315px;font-size:12px;color:#1a1a1a;transform:scaleX(0.9310);">Last Week</span>
<span class="t " style="left:109.40px;top:336px;font-size:12px;color:#1a1a1a;transform:scaleX(0.9939);">Last Month</span>
<span class="t " style="left:109.40px;top:357px;font-size:12px;color:#1a1a1a;transform:scaleX(0.9521);">Last Quarter</span>
<span class="t " style="left:109.40px;top:378px;font-size:12px;color:#1a1a1a;transform:scaleX(0.9033);">Last Year</span>
<div class="a" style="left:188px;top:208px;width:1px;height:199px;background:#e6e6e6;"></div>
<div class="a" style="left:96px;top:407px;width:368px;height:1px;background:#e6e6e6;"></div>
<div class="a" style="left:197px;top:216px;width:126px;height:25px;background:#f8f8f8;border:1.5px solid #005d94;border-radius:3.5px;"></div>
<div class="a" style="left:331px;top:216px;width:125px;height:25px;background:#f5f5f5;border:1px solid #ececec;border-radius:3.5px;"></div>
<span class="t " style="left:205.00px;top:219px;font-size:12px;color:#333;transform:scaleX(0.9809);">01/Jan/2022</span>
<span class="t " style="left:338.75px;top:219px;font-size:12px;color:#333;transform:scaleX(1.0007);">31/Dec/2022</span>
<div class="a" style="left:214px;top:270px;width:225px;height:67px;background:#fcfcfc;"></div>
<div class="a" style="left:214px;top:246px;width:225px;height:24px;background:linear-gradient(#e3e9f0,#eef1f5);"></div>
<svg class="a" style="left:228px;top:250.6px;" width="6.2" height="9.8" viewBox="0 0 6.2 9.8"><path d="M6.2 0V9.8L0 4.9Z" fill="#222"/></svg>
<svg class="a" style="left:419.2px;top:250.6px;" width="6.2" height="9.8" viewBox="0 0 6.2 9.8"><path d="M0 0V9.8L6.2 4.9Z" fill="#222"/></svg>
<span class="t " style="left:303.15px;top:247px;font-size:12px;color:#1a1a1a;transform:scaleX(0.9129);">July 2022</span>
<span class="t " style="left:257.25px;top:273.4px;font-size:10px;color:#111;transform:scale(1.0645,0.9);transform-origin:0 13px;font-weight:700;">S</span>
<span class="t " style="left:277.65px;top:273.4px;font-size:10px;color:#111;transform:scale(1.2485,0.9);transform-origin:0 13px;font-weight:700;">M</span>
<span class="t " style="left:300.90px;top:273.4px;font-size:10px;color:#111;transform:scale(1.3093,0.9);transform-origin:0 13px;font-weight:700;">T</span>
<span class="t " style="left:321.20px;top:273.4px;font-size:10px;color:#111;transform:scale(1.2182,0.9);transform-origin:0 13px;font-weight:700;">W</span>
<span class="t " style="left:345.00px;top:273.4px;font-size:10px;color:#111;transform:scale(1.3093,0.9);transform-origin:0 13px;font-weight:700;">T</span>
<span class="t " style="left:367.80px;top:273.4px;font-size:10px;color:#111;transform:scale(1.0638,0.9);transform-origin:0 13px;font-weight:700;">F</span>
<span class="t " style="left:389.55px;top:273.4px;font-size:10px;color:#111;transform:scale(1.0645,0.9);transform-origin:0 13px;font-weight:700;">S</span>
<div class="a" style="left:250px;top:294px;width:154px;height:102px;background:#cbe3ee;"></div>
<div class="a" style="left:271.5px;top:294px;width:1px;height:102px;background:rgba(255,255,255,0.28);"></div>
<div class="a" style="left:293.5px;top:294px;width:1px;height:102px;background:rgba(255,255,255,0.28);"></div>
<div class="a" style="left:315.5px;top:294px;width:1px;height:102px;background:rgba(255,255,255,0.28);"></div>
<div class="a" style="left:337.5px;top:294px;width:1px;height:102px;background:rgba(255,255,255,0.28);"></div>
<div class="a" style="left:359.5px;top:294px;width:1px;height:102px;background:rgba(255,255,255,0.28);"></div>
<div class="a" style="left:381.5px;top:294px;width:1px;height:102px;background:rgba(255,255,255,0.28);"></div>
<div class="a" style="left:250px;top:310.5px;width:154px;height:1px;background:rgba(255,255,255,0.18);"></div>
<div class="a" style="left:250px;top:327.5px;width:154px;height:1px;background:rgba(255,255,255,0.18);"></div>
<div class="a" style="left:250px;top:344.5px;width:154px;height:1px;background:rgba(255,255,255,0.18);"></div>
<div class="a" style="left:250px;top:361.5px;width:154px;height:1px;background:rgba(255,255,255,0.18);"></div>
<div class="a" style="left:250px;top:378.5px;width:154px;height:1px;background:rgba(255,255,255,0.18);"></div>
<div class="a" style="left:359.5px;top:311.3px;width:22px;height:16.7px;background:#b4ced9;border-radius:2px;"></div>
<span class="t " style="left:254.90px;top:293px;font-size:12px;color:#1a1a1a;transform:scaleX(0.9143);">26</span>
<span class="t " style="left:276.90px;top:293px;font-size:12px;color:#1a1a1a;transform:scaleX(0.9143);">27</span>
<span class="t " style="left:298.90px;top:293px;font-size:12px;color:#1a1a1a;transform:scaleX(0.9143);">28</span>
<span class="t " style="left:320.90px;top:293px;font-size:12px;color:#1a1a1a;transform:scaleX(0.9143);">29</span>
<span class="t " style="left:342.90px;top:293px;font-size:12px;color:#1a1a1a;transform:scaleX(0.9143);">30</span>
<span class="t " style="left:367.90px;top:293px;font-size:12px;color:#1a1a1a;transform:scaleX(0.9293);">1</span>
<span class="t " style="left:389.90px;top:293px;font-size:12px;color:#1a1a1a;transform:scaleX(0.9293);">2</span>
<span class="t " style="left:257.90px;top:310px;font-size:12px;color:#1a1a1a;transform:scaleX(0.9293);">3</span>
<span class="t " style="left:279.90px;top:310px;font-size:12px;color:#1a1a1a;transform:scaleX(0.9293);">4</span>
<span class="t " style="left:301.90px;top:310px;font-size:12px;color:#1a1a1a;transform:scaleX(0.9293);">5</span>
<span class="t " style="left:323.90px;top:310px;font-size:12px;color:#1a1a1a;transform:scaleX(0.9293);">6</span>
<span class="t " style="left:345.90px;top:310px;font-size:12px;color:#1a1a1a;transform:scaleX(0.9293);">7</span>
<span class="t " style="left:367.90px;top:310px;font-size:12px;color:#1a1a1a;transform:scaleX(0.9293);">8</span>
<span class="t " style="left:389.90px;top:310px;font-size:12px;color:#1a1a1a;transform:scaleX(0.9293);">9</span>
<span class="t " style="left:254.90px;top:327px;font-size:12px;color:#1a1a1a;transform:scaleX(0.9143);">10</span>
<span class="t " style="left:276.90px;top:327px;font-size:12px;color:#1a1a1a;transform:scaleX(0.9794);">11</span>
<span class="t " style="left:298.90px;top:327px;font-size:12px;color:#1a1a1a;transform:scaleX(0.9143);">12</span>
<span class="t " style="left:320.90px;top:327px;font-size:12px;color:#1a1a1a;transform:scaleX(0.9143);">13</span>
<span class="t " style="left:342.90px;top:327px;font-size:12px;color:#1a1a1a;transform:scaleX(0.9143);">14</span>
<span class="t " style="left:364.90px;top:327px;font-size:12px;color:#1a1a1a;transform:scaleX(0.9143);">15</span>
<span class="t " style="left:386.90px;top:327px;font-size:12px;color:#1a1a1a;transform:scaleX(0.9143);">16</span>
<span class="t " style="left:254.90px;top:344px;font-size:12px;color:#1a1a1a;transform:scaleX(0.9143);">17</span>
<span class="t " style="left:276.90px;top:344px;font-size:12px;color:#1a1a1a;transform:scaleX(0.9143);">18</span>
<span class="t " style="left:298.90px;top:344px;font-size:12px;color:#1a1a1a;transform:scaleX(0.9143);">19</span>
<span class="t " style="left:320.90px;top:344px;font-size:12px;color:#1a1a1a;transform:scaleX(0.9143);">20</span>
<span class="t " style="left:342.90px;top:344px;font-size:12px;color:#1a1a1a;transform:scaleX(0.9143);">21</span>
<span class="t " style="left:364.90px;top:344px;font-size:12px;color:#1a1a1a;transform:scaleX(0.9143);">22</span>
<span class="t " style="left:386.90px;top:344px;font-size:12px;color:#1a1a1a;transform:scaleX(0.9143);">23</span>
<span class="t " style="left:254.90px;top:361px;font-size:12px;color:#1a1a1a;transform:scaleX(0.9143);">24</span>
<span class="t " style="left:276.90px;top:361px;font-size:12px;color:#1a1a1a;transform:scaleX(0.9143);">25</span>
<span class="t " style="left:298.90px;top:361px;font-size:12px;color:#1a1a1a;transform:scaleX(0.9143);">26</span>
<span class="t " style="left:320.90px;top:361px;font-size:12px;color:#1a1a1a;transform:scaleX(0.9143);">27</span>
<span class="t " style="left:342.90px;top:361px;font-size:12px;color:#1a1a1a;transform:scaleX(0.9143);">28</span>
<span class="t " style="left:364.90px;top:361px;font-size:12px;color:#1a1a1a;transform:scaleX(0.9143);">29</span>
<span class="t " style="left:386.90px;top:361px;font-size:12px;color:#1a1a1a;transform:scaleX(0.9143);">30</span>
<span class="t " style="left:254.90px;top:378px;font-size:12px;color:#1a1a1a;transform:scaleX(0.9143);">31</span>
<span class="t " style="left:279.90px;top:378px;font-size:12px;color:#1a1a1a;transform:scaleX(0.9293);">1</span>
<span class="t " style="left:301.90px;top:378px;font-size:12px;color:#1a1a1a;transform:scaleX(0.9293);">2</span>
<span class="t " style="left:323.90px;top:378px;font-size:12px;color:#1a1a1a;transform:scaleX(0.9293);">3</span>
<span class="t " style="left:345.90px;top:378px;font-size:12px;color:#1a1a1a;transform:scaleX(0.9293);">4</span>
<span class="t " style="left:367.90px;top:378px;font-size:12px;color:#1a1a1a;transform:scaleX(0.9293);">5</span>
<span class="t " style="left:389.90px;top:378px;font-size:12px;color:#1a1a1a;transform:scaleX(0.9293);">6</span>
<div class="a" style="left:197px;top:416px;width:75px;height:25px;background:#eeeeee;"></div>
<div class="a" style="left:296px;top:416px;width:75px;height:25px;background:#eeeeee;"></div>
<div class="a" style="left:381px;top:416px;width:75px;height:25px;background:#005d94;border-radius:1.5px;"></div>
<span class="t " style="left:217.50px;top:419px;font-size:12px;color:#005d94;transform:scaleX(0.8683);">CLEAR</span>
<span class="t " style="left:311.90px;top:419px;font-size:12px;color:#005d94;transform:scaleX(0.8874);">CANCEL</span>
<span class="t " style="left:402.50px;top:419px;font-size:12px;color:#fff;transform:scaleX(0.8929);">APPLY</span>
</body>
</html>
